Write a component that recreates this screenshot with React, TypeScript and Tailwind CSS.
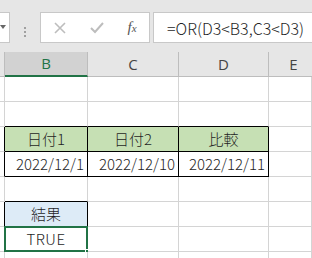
import { ReactNode } from 'react'

const FONT = 'font-["Noto_Sans_CJK_JP","Noto_Sans",sans-serif]'

type Cell = {
  text?: string
  align?: 'left' | 'center' | 'right'
  bg?: string
  right?: boolean // black right border
  bottom?: boolean // black bottom border
  active?: boolean
}

const COLS = ['w-[5px]', 'w-[83px]', 'w-[91px]', 'w-[90px]', 'flex-1']

// rows 1..8, columns A..E
const ROWS: Cell[][] = [
  [{}, {}, {}, {}, {}],
  [{}, { bottom: true }, { bottom: true }, { bottom: true }, {}],
  [
    { right: true },
    { text: '日付1', align: 'center', bg: 'bg-[#c6e0b4]', right: true, bottom: true },
    { text: '日付2', align: 'center', bg: 'bg-[#c6e0b4]', right: true, bottom: true },
    { text: '比較', align: 'center', bg: 'bg-[#c6e0b4]', right: true, bottom: true },
    {},
  ],
  [
    { right: true },
    { text: '2022/12/1', align: 'right', right: true, bottom: true },
    { text: '2022/12/10', align: 'right', right: true, bottom: true },
    { text: '2022/12/11', align: 'right', right: true, bottom: true },
    {},
  ],
  [{}, { bottom: true }, {}, {}, {}],
  [
    { right: true },
    { text: '結果', align: 'center', bg: 'bg-[#ddebf7]', right: true, bottom: true },
    {},
    {},
    {},
  ],
  [{}, { text: 'TRUE', align: 'center', active: true }, {}, {}, {}],
  [{}, {}, {}, {}, {}],
]

function GridCell({ cell, width }: { cell: Cell; width: string }) {
  const justify =
    cell.align === 'center' ? 'justify-center' : cell.align === 'right' ? 'justify-end pr-[3px]' : 'justify-start'
  return (
    <div
      className={`relative h-[25px] shrink-0 flex items-center ${width} ${justify} ${cell.bg ?? 'bg-white'} border-r border-b ${
        cell.right ? 'border-r-black' : 'border-r-[#d4d4d4]'
      } ${cell.bottom ? 'border-b-black' : 'border-b-[#d4d4d4]'} text-[15px] font-light text-[#1f1f1f]`}
    >
      {cell.text && <span className={cell.active ? 'tracking-[0.5px]' : ''}>{cell.text}</span>}
      {cell.active && (
        <>
          <div className="absolute -left-px -top-px w-[84px] h-[26px] border-2 border-[#217346]" />
          <div className="absolute right-[-4px] bottom-[-4px] w-[6px] h-[6px] bg-[#217346] border border-white" />
        </>
      )}
    </div>
  )
}

function ToolBox({ className, children }: { className: string; children?: ReactNode }) {
  return <div className={`h-[31px] bg-white border border-[#c8c8c8] flex items-center ${className}`}>{children}</div>
}

export default function App() {
  return (
    <div className={`w-[312px] h-[258px] overflow-hidden bg-white ${FONT}`}>
      {/* formula bar */}
      <div className="h-[52px] bg-[#e6e6e6] pt-[12px] flex">
        <ToolBox className="w-[11px] ml-[-1px] border-l-0 justify-start pl-[1px]">
          <svg width="6" height="5" viewBox="0 0 6 5">
            <path d="M0 0 L6 0 L3 4 Z" fill="#666" />
          </svg>
        </ToolBox>
        <div className="w-[30px] flex flex-col items-center justify-center gap-[2px]">
          <div className="w-[2px] h-[2px] bg-[#a0a0a0]" />
          <div className="w-[2px] h-[2px] bg-[#a0a0a0]" />
          <div className="w-[2px] h-[2px] bg-[#a0a0a0]" />
        </div>
        <ToolBox className="w-[110px]">
          <div className="w-[38px] flex justify-center">
            <svg width="12" height="12" viewBox="0 0 12 12">
              <path d="M1 1 L11 11 M11 1 L1 11" stroke="#bdbdbd" strokeWidth="1.6" />
            </svg>
          </div>
          <div className="w-[36px] flex justify-center">
            <svg width="14" height="12" viewBox="0 0 14 12">
              <path d="M1 6 L5 10 L13 1" stroke="#bdbdbd" strokeWidth="2" fill="none" />
            </svg>
          </div>
          <div className='w-[34px] flex justify-center font-["Liberation_Serif",serif] italic text-[15px] text-[#555]'>
            f<span className="text-[11px] mt-[4px]">x</span>
          </div>
        </ToolBox>
        <ToolBox className="flex-1 ml-[3px] border-r-0 pl-[13px] text-[16px] font-light text-[#1f1f1f]">
          =OR(D3&lt;B3,C3&lt;D3)
        </ToolBox>
      </div>

      {/* column headers */}
      <div className='flex h-[25px] bg-[#e6e6e6] font-["Open_Sans",sans-serif] text-[15px] text-[#444]'>
        <div className="w-[5px] border-r border-[#bdbdbd] border-b border-b-[#bdbdbd]" />
        <div className="w-[83px] bg-[#d2d2d2] border-r border-[#bdbdbd] border-b-2 border-b-[#217346] flex items-center justify-center text-[#217346]">
          B
        </div>
        <div className="w-[91px] border-r border-[#bdbdbd] border-b border-b-[#bdbdbd] flex items-center justify-center">
          C
        </div>
        <div className="w-[90px] border-r border-[#bdbdbd] border-b border-b-[#bdbdbd] flex items-center justify-center">
          D
        </div>
        <div className="flex-1 border-b border-b-[#bdbdbd] flex items-center justify-center pl-[6px]">E</div>
      </div>

      {/* cells */}
      {ROWS.map((row, r) => (
        <div key={r} className="flex">
          {row.map((cell, c) => (
            <GridCell key={c} cell={cell} width={COLS[c]} />
          ))}
        </div>
      ))}
    </div>
  )
}
